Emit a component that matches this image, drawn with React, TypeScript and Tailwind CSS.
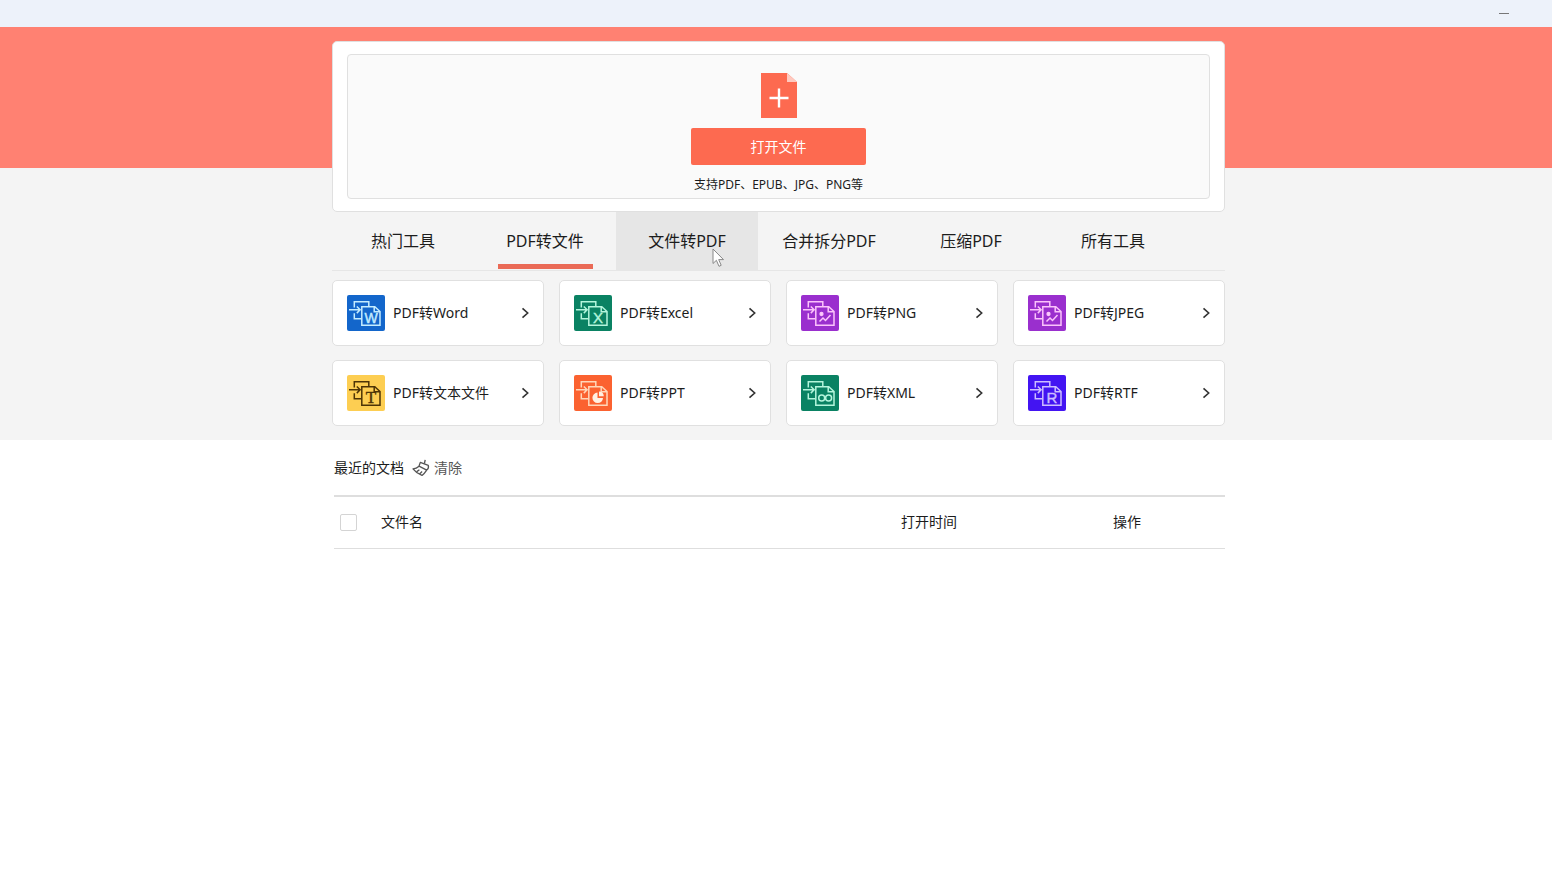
import type { ReactNode } from "react";

type Tool = { label: string; bg: string; ink: string; glyph: ReactNode };

const letter = (char: string, family: string, size: number, ink: string) => (
  <text x="24" y="28" textAnchor="middle" fontFamily={family} fontSize={size} fill={ink} stroke={ink} strokeWidth="0.4">
    {char}
  </text>
);

const picture = (
  <>
    <circle cx="20.5" cy="19" r="1.4" fill="#fbd3fb" />
    <path d="M18.5 26.5l3.500-3.500 2.500 2.500 5-5.500" />
  </>
);

const tools: Tool[] = [
  { label: "PDF转Word", bg: "#1366cb", ink: "#c4ecff", glyph: letter("W", "Liberation Sans, sans-serif", 14, "#c4ecff") },
  { label: "PDF转Excel", bg: "#0a8263", ink: "#b4f5dc", glyph: letter("X", "Liberation Sans, sans-serif", 15, "#b4f5dc") },
  { label: "PDF转PNG", bg: "#9a2fce", ink: "#fbc3fb", glyph: picture },
  { label: "PDF转JPEG", bg: "#9a2fce", ink: "#fbc3fb", glyph: picture },
  { label: "PDF转文本文件", bg: "#fdce52", ink: "#4d3406", glyph: letter("T", "Liberation Serif, serif", 17, "#4d3406") },
  {
    label: "PDF转PPT",
    bg: "#fb6230",
    ink: "#ffd6b8",
    glyph: (
      <>
        <path d="M23.500 17.500a5.300 5.300 0 1 0 5.500 5.500h-5.500z" fill="#fff0e2" stroke="none" />
        <path d="M25 16.500a5 5 0 0 1 4.800 4.800H25z" fill="#fff0e2" stroke="none" />
      </>
    ),
  },
  {
    label: "PDF转XML",
    bg: "#0a8263",
    ink: "#b4f5dc",
    glyph: (
      <>
        <circle cx="20.7" cy="23" r="3" />
        <circle cx="27.6" cy="23" r="3" />
      </>
    ),
  },
  { label: "PDF转RTF", bg: "#4314f2", ink: "#cdbdff", glyph: letter("R", "Liberation Sans, sans-serif", 15, "#cdbdff") },
];

const tabs = ["热门工具", "PDF转文件", "文件转PDF", "合并拆分PDF", "压缩PDF", "所有工具"];
const activeTab = 1;
const hoveredTab = 2;

function ToolIcon({ bg, ink, glyph }: Omit<Tool, "label">) {
  return (
    <svg width="38" height="36" viewBox="0 0 38 36" fill="none" stroke={ink} strokeWidth="1.5" aria-hidden="true">
      <rect width="38" height="36" rx="2" fill={bg} stroke="none" />
      <path d="M7.300 12.500V6.700h14.500v4.500M7.300 18.300v5.400h7.200" />
      <path d="M2 14.800h10.500M9.800 11.500l3.300 3.300-3.300 3.300" />
      <path d="M14.800 11.700h13l5.200 4.800v13.800H14.800zM27.200 11.700v5h5.600" />
      {glyph}
    </svg>
  );
}

function FileIcon() {
  return (
    <svg width="36" height="46" viewBox="0 0 36 46" aria-hidden="true">
      <path d="M0 1h26l10 9v36H0z" fill="#fd6a50" />
      <path d="M26 1l10 9H26z" fill="#ffc9bf" />
      <path d="M8.500 26h19M18 16.500v19" stroke="#fff" strokeWidth="2.400" />
    </svg>
  );
}

function Chevron() {
  return (
    <svg width="8" height="12" viewBox="0 0 8 12" fill="none" stroke="#333" strokeWidth="1.600" aria-hidden="true">
      <path d="M1.500 1.300L6.700 6l-5.200 4.700" />
    </svg>
  );
}

function Broom() {
  return (
    <svg width="18" height="18" viewBox="0 0 18 18" fill="none" stroke="#555" strokeWidth="1.3" strokeLinejoin="round" aria-hidden="true">
      <path d="M13.200 0.800L12.400 4.500" />
      <path d="M8.300 3.400L16.300 6.400c.6 2-.2 3.600-1.600 4.700L7 7.200z" />
      <path d="M7 7.200Q4.500 9.500 1 9.800q3.500 4.500 9 6.600 2.600-2 4.700-5.300M4.800 12.600l2.600-1.800M7.800 14.700l2.300-2.200" />
    </svg>
  );
}

function Cursor() {
  return (
    <svg className="pointer-events-none absolute top-9 left-24" width="13" height="20" viewBox="0 0 13 20" aria-hidden="true">
      <path d="M1 1v14.500l3.400-3.200 2.600 6 2.200-1-2.500-5.700H11.500z" fill="#fff" stroke="#888" strokeWidth="1" strokeLinejoin="round" />
    </svg>
  );
}

export default function App() {
  return (
    <div className="min-h-screen bg-white font-['Noto_Sans','Noto_Sans_CJK_SC',sans-serif] text-sm text-[#1c1c1c]">
      <header className="flex h-[27px] justify-end bg-[#edf2fa] pr-[43px]">
        <button type="button" aria-label="最小化" className="flex items-center">
          <span className="h-px w-[10px] bg-[#777]" />
        </button>
      </header>

      <section className="bg-[linear-gradient(#ff8172_141px,#f4f4f4_141px)] pt-[14px] pb-[14px] pl-[5px]">
        <div className="mx-auto max-w-[893px]">
          <div className="rounded-[5px] border border-[#e0e0e0] bg-white px-[14px] py-3">
            <div className="flex flex-col items-center rounded-[4px] border border-[#e0e0e0] bg-[#fafafa] pt-[17px] pb-[3px]">
              <FileIcon />
              <button type="button" className="mt-[10px] h-[37px] w-[175px] rounded-[2px] bg-[#fd6a50] text-white">
                打开文件
              </button>
              <p className="mt-[10px] text-xs leading-5">支持PDF、EPUB、JPG、PNG等</p>
            </div>
          </div>

          <nav className="flex border-b border-[#e6e6e6]">
            {tabs.map((tab, i) => (
              <button
                key={tab}
                type="button"
                className={`relative flex h-[58px] w-[142px] flex-col items-center pt-[6px] pb-px text-base ${i === hoveredTab ? "bg-[#e6e6e6]" : ""}`}
              >
                <span className="flex flex-1 items-center">{tab}</span>
                <span className={`h-[5px] w-[95px] ${i === activeTab ? "bg-[#ea6a56]" : ""}`} />
                {i === hoveredTab && <Cursor />}
              </button>
            ))}
          </nav>

          <div className="mt-[9px] grid grid-cols-4 gap-x-[15px] gap-y-[14px]">
            {tools.map(({ label, ...icon }) => (
              <button
                key={label}
                type="button"
                className="flex h-[66px] items-center rounded-[5px] border border-[#e0e0e0] bg-white px-[14px]"
              >
                <ToolIcon {...icon} />
                <span className="ml-2 flex-1 text-left">{label}</span>
                <Chevron />
              </button>
            ))}
          </div>
        </div>
      </section>

      <section className="pl-[5px]">
        <div className="mx-auto max-w-[893px] pl-[2px]">
          <div className="flex h-[55px] items-center gap-2">
            <h2>最近的文档</h2>
            <button type="button" className="flex items-center gap-1 text-[#555]">
              <Broom />
              清除
            </button>
          </div>
          <table className="w-full table-fixed border-t-2 border-b border-[#dedede]">
            <thead>
              <tr className="h-[52px]">
                <th className="w-[47px] pl-[6px]">
                  <input
                    type="checkbox"
                    aria-label="全选"
                    className="block size-[17px] appearance-none rounded-[2px] border border-[#d4d4d4] bg-white"
                  />
                </th>
                <th className="text-left font-normal">文件名</th>
                <th className="w-[200px] font-normal">打开时间</th>
                <th className="w-[196px] font-normal">操作</th>
              </tr>
            </thead>
          </table>
        </div>
      </section>
    </div>
  );
}
